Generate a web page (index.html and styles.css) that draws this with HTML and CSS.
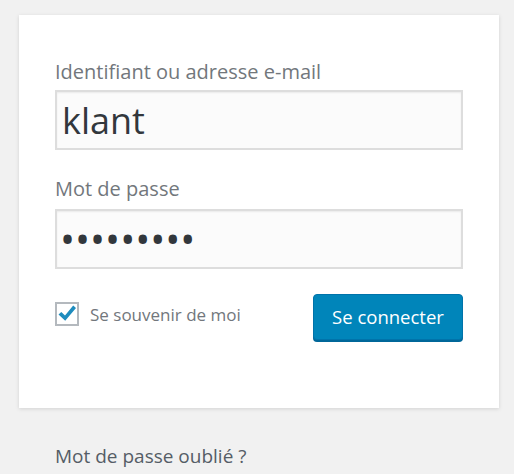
FILE: index.html
```html
<!DOCTYPE html>
<html lang="fr">
<head>
<meta charset="utf-8">
<title>Connexion</title>
<link rel="stylesheet" href="styles.css">
</head>
<body>
<div class="login">
  <form class="card">
    <label class="field-label first" for="user">Identifiant ou adresse e-mail</label>
    <input class="field" id="user" type="text" value="klant">
    <label class="field-label" for="pass">Mot de passe</label>
    <input class="field pass" id="pass" type="password" value="123456789">
    <div class="actions">
      <label class="remember">
        <span class="box"><svg viewBox="0 0 20 20" width="20" height="20"><path d="M1.5 10.5 L4.3 7.9 L8 11.4 L16.2 1.5 L19 4 L8.2 16.8 Z" fill="#1e8cbe"/></svg></span>
        <span>Se souvenir de moi</span>
      </label>
      <button type="button" class="submit">Se connecter</button>
    </div>
  </form>
  <p class="nav">Mot de passe oublié ?</p>
</div>
</body>
</html>
```
FILE: styles.css
```css
html, body { margin: 0; padding: 0; }
body {
  background: #f1f1f1;
  font-family: "Open Sans", "Noto Sans", sans-serif;
  width: 514px;
  height: 474px;
  overflow: hidden;
}
.login { padding: 15px 15px 0 19px; }
.card {
  width: 480px;
  box-sizing: border-box;
  background: #fff;
  padding: 41px 36px 68px;
  box-shadow: 0 1px 4px rgba(0,0,0,.13);
  display: flex;
  flex-direction: column;
}
.field-label {
  display: block;
  font-size: 20px;
  line-height: 32px;
  color: #72777c;
  margin-bottom: 4px;
}
.field-label.first { margin-bottom: 2px; }
.field {
  display: block;
  box-sizing: border-box;
  width: 408px;
  height: 60px;
  margin: 0 0 23px;
  padding: 3px 5px;
  border: 2px solid #ddd;
  background: #fbfbfb;
  font-family: inherit;
  font-size: 36px;
  color: #32373c;
  outline: none;
  box-shadow: inset 0 1px 2px rgba(0,0,0,.07);
}
.pass { letter-spacing: 0; font-size: 40px; padding: 0 4px 2px 3px; }
.actions {
  display: flex;
  justify-content: space-between;
  align-items: flex-start;
  margin-top: 2px;
}
.remember {
  display: flex;
  align-items: center;
  gap: 11px;
  margin-top: 8px;
  font-size: 17px;
  color: #72777c;
}
.box {
  width: 24px;
  height: 24px;
  box-sizing: border-box;
  border: 2px solid #b4b9be;
  background: #fff;
  display: flex;
  align-items: center;
  justify-content: center;
}
.submit {
  width: 150px;
  height: 46px;
  background: #0085ba;
  border: 1px solid #0073aa;
  border-radius: 4px;
  box-shadow: 0 2px 0 #006799;
  color: #fff;
  font-family: inherit;
  font-size: 18.5px;
  padding: 0 0 2px;
}
.nav {
  margin: 35px 0 0 36px;
  font-size: 19px;
  color: #555d66;
}
```
